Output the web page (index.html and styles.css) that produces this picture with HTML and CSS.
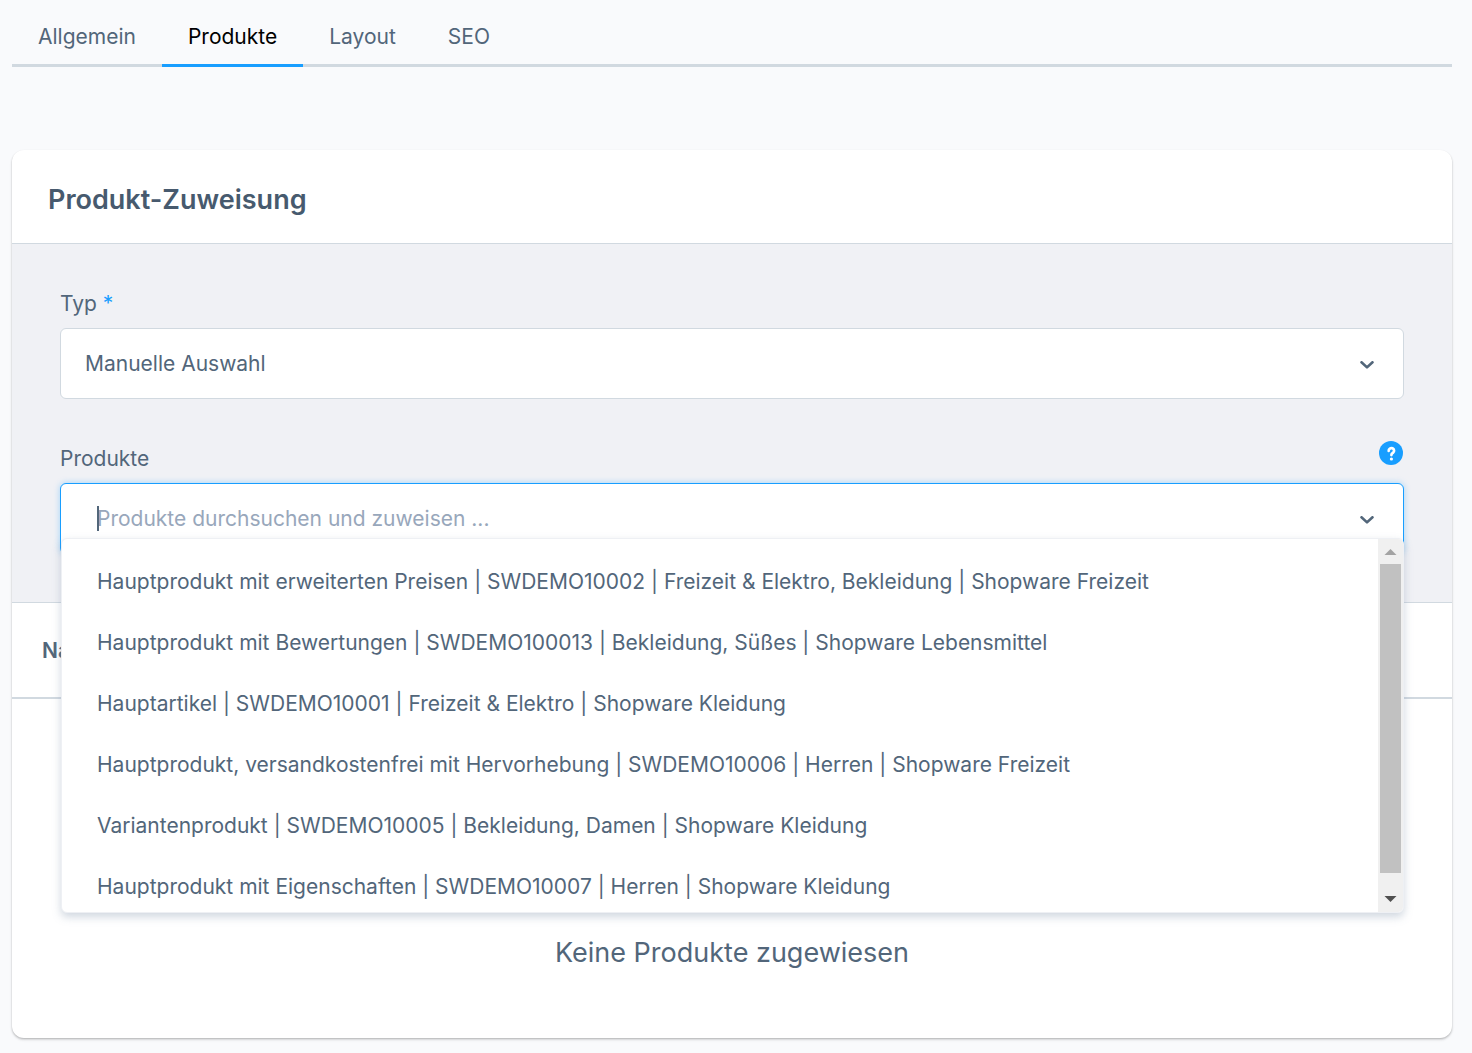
FILE: index.html
```html
<!DOCTYPE html>
<html lang="de">
<head>
<meta charset="utf-8">
<meta name="viewport" content="width=device-width, initial-scale=1">
<title>Kategorie – Produkte</title>
<link rel="stylesheet" href="styles.css">
</head>
<body>
<main class="page">
  <nav class="tabs">
    <a class="tab" href="#allgemein">Allgemein</a>
    <a class="tab tab-active" href="#produkte" aria-current="page">Produkte</a>
    <a class="tab" href="#layout">Layout</a>
    <a class="tab" href="#seo">SEO</a>
  </nav>

  <section class="card">
    <header class="card-header">
      <h1 class="card-title">Produkt-Zuweisung</h1>
    </header>

    <form class="assignment">
      <div class="field">
        <div class="field-head">
          <label class="field-label" for="type">Typ <span class="required">*</span></label>
        </div>
        <div class="control">
          <select class="input type-select" id="type">
            <option selected>Manuelle Auswahl</option>
            <option>Dynamische Produktgruppe</option>
          </select>
          <svg class="chevron" viewBox="0 0 14 8" aria-hidden="true"><path d="M1.500 1.300 7 6.400l5.500-5.100"/></svg>
        </div>
      </div>

      <div class="field">
        <div class="field-head">
          <label class="field-label" for="products">Produkte</label>
          <button class="help" type="button" aria-label="Hilfe">
            <svg class="help-icon" viewBox="0 0 24 24" aria-hidden="true">
              <circle cx="12" cy="12" r="12" fill="#189eff"/>
              <path d="M9.700 9.900a2.700 2.600 0 1 1 4.300 1.900c-1 .7-1.600 1-1.600 2.300" fill="none" stroke="#fff" stroke-width="2.700" stroke-linecap="round"/>
              <circle cx="12.400" cy="18" r="1.600" fill="#fff"/>
            </svg>
          </button>
        </div>
        <div class="control">
          <input class="input product-search" id="products" type="text" placeholder="Produkte durchsuchen und zuweisen ..." autocomplete="off">
          <span class="caret"></span>
          <svg class="chevron" viewBox="0 0 14 8" aria-hidden="true"><path d="M1.500 1.300 7 6.400l5.500-5.100"/></svg>
          <div class="results">
            <ul class="result-list">
              <li class="result">Hauptprodukt mit erweiterten Preisen | SWDEMO10002 | Freizeit &amp; Elektro, Bekleidung | Shopware Freizeit</li>
              <li class="result">Hauptprodukt mit Bewertungen | SWDEMO100013 | Bekleidung, Süßes | Shopware Lebensmittel</li>
              <li class="result">Hauptartikel | SWDEMO10001 | Freizeit &amp; Elektro | Shopware Kleidung</li>
              <li class="result">Hauptprodukt, versandkostenfrei mit Hervorhebung | SWDEMO10006 | Herren | Shopware Freizeit</li>
              <li class="result">Variantenprodukt | SWDEMO10005 | Bekleidung, Damen | Shopware Kleidung</li>
              <li class="result">Hauptprodukt mit Eigenschaften | SWDEMO10007 | Herren | Shopware Kleidung</li>
            </ul>
            <div class="scrollbar" aria-hidden="true">
              <svg class="scroll-arrow" viewBox="0 0 25 25"><path d="M6.500 16h12l-6-6z" fill="#a3a3a3"/></svg>
              <div class="scroll-thumb"></div>
              <svg class="scroll-arrow" viewBox="0 0 25 25"><path d="M6.500 9h12l-6 6z" fill="#505050"/></svg>
            </div>
          </div>
        </div>
      </div>
    </form>

    <table class="grid">
      <thead>
        <tr><th class="grid-head" scope="col">Name</th></tr>
      </thead>
      <tbody>
        <tr><td class="grid-empty">Keine Produkte zugewiesen</td></tr>
      </tbody>
    </table>
  </section>
</main>
</body>
</html>
```

FILE: styles.css
```css
*,
*::before,
*::after {
  box-sizing: border-box;
}

body {
  margin: 0;
  background: #f9fafc;
  color: #52667a;
  font-family: Inter, "Liberation Sans", sans-serif;
  font-size: 21px;
  font-weight: 400;
  line-height: 36px;
}

.page {
  padding: 0 20px 12px 12px;
}

/* Tabs */
.tabs {
  display: flex;
  border-bottom: 3px solid #d1d9e0;
}

.tab {
  margin-bottom: -3px;
  padding: 19px 26px 9px;
  border-bottom: 3px solid transparent;
  color: #52667a;
  text-decoration: none;
}

.tab-active {
  border-bottom-color: #189eff;
  color: #000;
}

/* Card */
.card {
  margin-top: 83px;
  border-radius: 12px;
  background: #fff;
  box-shadow: 0 1px 2px rgba(0, 0, 0, 0.2), 0 2px 3px rgba(0, 0, 0, 0.1);
}

.card-header {
  padding: 32px 36px 25px;
  border-bottom: 1px solid #d1d9e0;
}

.card-title {
  margin: 0;
  color: #475a6e;
  font-size: 27px;
  font-weight: 600;
  line-height: 36px;
}

.assignment {
  display: flex;
  flex-direction: column;
  gap: 42px;
  padding: 42px 48px 48px;
  border-bottom: 1px solid #d1d9e0;
  background: #f0f1f5;
}

/* Fields */
.field-head {
  display: flex;
  justify-content: space-between;
  align-items: flex-start;
  min-height: 42px;
  padding-right: 1px;
}

.required {
  color: #189eff;
}

.help {
  width: 24px;
  height: 24px;
  padding: 0;
  border: 0;
  background: none;
  cursor: pointer;
}

.help-icon {
  display: block;
}

.control {
  position: relative;
}

.input {
  display: block;
  width: 100%;
  height: 71px;
  border: 1px solid #d1d9e0;
  border-radius: 6px;
  outline: 0;
  background: #fff;
  color: #52667a;
  font: inherit;
}

.type-select {
  appearance: none;
  padding: 0 60px 0 24px;
}

.product-search {
  padding: 0 60px 0 36px;
  border-color: #189eff;
  box-shadow: 0 0 6px rgba(24, 158, 255, 0.35);
}

.product-search::placeholder {
  color: #98a7bb;
  opacity: 1;
}

.caret {
  position: absolute;
  top: 23px;
  left: 37px;
  width: 2px;
  height: 25px;
  background: #52667a;
}

.chevron {
  position: absolute;
  top: 33px;
  right: 30px;
  width: 14px;
  height: 8px;
  fill: none;
  stroke: #52667a;
  stroke-width: 2.6;
  stroke-linecap: round;
  stroke-linejoin: round;
}

/* Search results */
.results {
  position: absolute;
  z-index: 1;
  top: 55px;
  right: 0;
  left: 1px;
  display: flex;
  height: 375px;
  border: 1px solid #eef0f4;
  border-radius: 6px;
  overflow: hidden;
  background: #fff;
  box-shadow: 0 4px 9px rgba(120, 140, 165, 0.35);
}

.result-list {
  flex: 1;
  min-width: 0;
  margin: 0;
  padding: 12px 0 12px 35px;
  overflow: hidden;
  list-style: none;
}

.result {
  height: 61px;
  line-height: 61px;
  white-space: nowrap;
}

.scrollbar {
  display: flex;
  flex-direction: column;
  width: 25px;
  background: #f0f0f0;
}

.scroll-arrow {
  display: block;
  width: 25px;
  height: 25px;
}

.scroll-thumb {
  height: 309px;
  margin: 0 2px auto;
  background: #c1c1c1;
}

/* Product grid */
.grid {
  width: 100%;
  border-collapse: separate;
  border-spacing: 0;
}

.grid-head {
  height: 96px;
  padding: 2px 30px 0;
  border-bottom: 2px solid #d1d9e0;
  font-weight: 600;
  text-align: left;
}

.grid-empty {
  padding: 236px 30px 67px;
  font-size: 27px;
  text-align: center;
}
```
